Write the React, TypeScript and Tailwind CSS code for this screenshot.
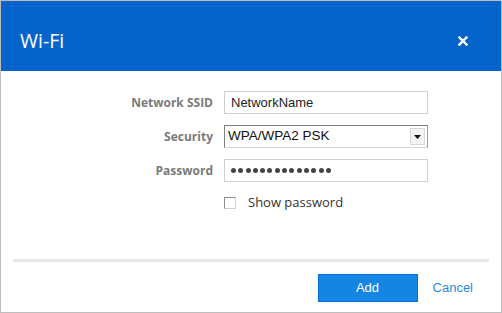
import React from 'react';

const dots = Array.from({ length: 14 });

function Row({ label, children }: { label: string; children: React.ReactNode }) {
  return (
    <div className="flex items-center h-[23px]">
      <div className="w-[223px] pr-[11px] text-right text-[12px] font-bold text-[#7a7a7a] font-['Open_Sans',sans-serif]">
        {label}
      </div>
      <div className="w-[204px] h-full">{children}</div>
    </div>
  );
}

export default function App() {
  return (
    <div className="w-[502px] h-[313px] border border-[#bdbdbd] bg-white flex flex-col">
      {/* Header */}
      <div className="h-[70px] bg-[#0563cc] flex items-center justify-between pl-[19px] pr-[33px] pt-[9px]">
        <span className="text-white text-[19.5px] font-['Open_Sans',sans-serif]">Wi-Fi</span>
        <svg width="10" height="10" viewBox="0 0 10 10">
          <path d="M1.5 1.5 L8.5 8.5 M8.5 1.5 L1.5 8.5" stroke="white" strokeWidth="2.4" strokeLinecap="square" />
        </svg>
      </div>

      {/* Form */}
      <div className="flex flex-col gap-[11px] pt-[20px]">
        <Row label="Network SSID">
          <div className="h-full border border-[#cfcfcf] flex items-center pl-[6px] text-[13px] text-[#222] font-['Liberation_Sans',Arial,sans-serif]">
            NetworkName
          </div>
        </Row>
        <Row label="Security">
          <div className="h-full border border-[#7f7f7f] border-b-[#d4d4d4] border-r-[#9a9a9a] flex items-center text-[13.5px] text-[#111] font-['Liberation_Sans',Arial,sans-serif]">
            <span className="flex-1 pl-[3px]">WPA/WPA2 PSK</span>
            <div className="w-[15px] h-[17px] mr-[2px] border border-[#d8d8d8] bg-[#f4f4f4] flex items-center justify-center">
              <svg width="7" height="4" viewBox="0 0 7 4">
                <path d="M0 0 H7 L3.5 4 Z" fill="#111" />
              </svg>
            </div>
          </div>
        </Row>
        <Row label="Password">
          <div className="h-full border border-[#cfcfcf] flex items-center pl-[6px] gap-[2.3px]">
            {dots.map((_, i) => (
              <span key={i} className="w-[5px] h-[5px] rounded-full bg-[#444]" />
            ))}
          </div>
        </Row>
        <div className="flex items-center h-[16px] mt-[2px] pl-[223px]">
          <span className="w-[12px] h-[12px] border border-[#8f8f8f] border-b-[#d0d0d0] border-r-[#d0d0d0] bg-white" />
          <span className="ml-[12px] text-[13px] text-[#333] font-['Open_Sans',sans-serif]">Show password</span>
        </div>
      </div>

      {/* Footer */}
      <div className="mt-auto mx-[12px] h-[3px] bg-[#e8e8e8]" />
      <div className="flex items-center justify-end pt-[12px] pb-[10px] pr-[28px]">
        <button className="w-[100px] h-[28px] bg-[#1585e4] border border-[#0b6ed1] text-white text-[13px] font-['Liberation_Sans',Arial,sans-serif]">
          Add
        </button>
        <span className="ml-[15px] text-[13px] text-[#2b8ae0] font-['Liberation_Sans',Arial,sans-serif]">Cancel</span>
      </div>
    </div>
  );
}
